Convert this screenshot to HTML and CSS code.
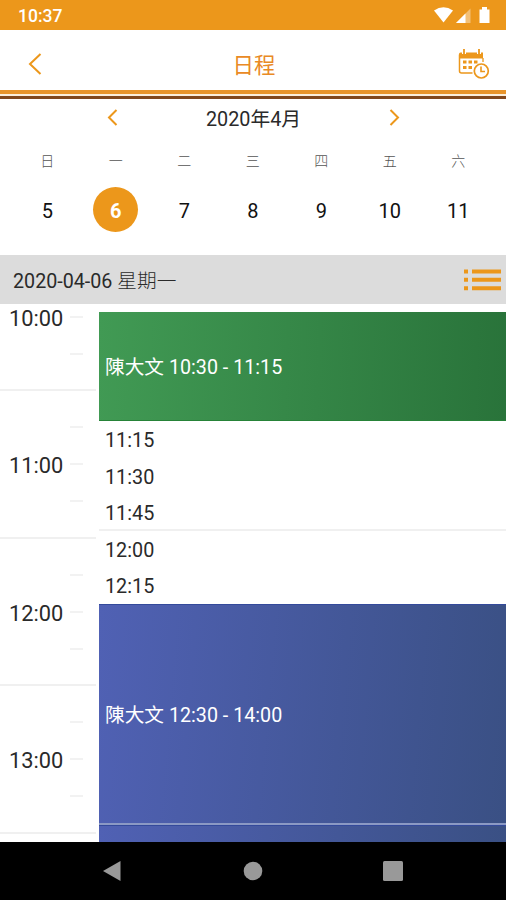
FILE: index.html
```html
<!DOCTYPE html>
<html lang="zh-Hant">
<head>
    <meta charset="UTF-8">
    <meta name="viewport" content="width=device-width, initial-scale=1.0">
    <title>日程</title>
    <link rel="stylesheet" href="styles.css">
</head>
<body>
    <div class="status">
        <span class="clock">10:37</span>
        <svg class="statusIcons" width="58" height="18" viewBox="0 0 58 18">
            <path d="M0 3.500Q9.500-3 19 3.500L9.500 15.500Z" fill="#fff"/>
            <path d="M22 16L36.500 1.500V16Z" fill="#fff" opacity=".4"/>
            <path d="M22 16L31.500 6.500V16Z" fill="#fff"/>
            <path d="M45.500 2.500h2.500V0h5v2.500h2.500V16h-10Z" fill="#fff"/>
        </svg>
    </div>
    <header class="header">
        <svg class="back" width="14" height="22" viewBox="0 0 14 22">
            <path d="M12.500 1L2 11L12.500 21"/>
        </svg>
        <h1>日程</h1>
        <svg class="calendar" width="32" height="31" viewBox="0 0 32 31">
            <path d="M1.500 5.500V22q0 2 2 2h11" fill="none" stroke="#ec971b" stroke-width="1.500"/>
            <path d="M1 9.500V5q0-1.500 1.500-1.500h22.500V9.500Z" fill="#ec971b"/>
            <path d="M25 9v4" stroke="#ec971b" stroke-width="1.300"/>
            <path d="M6 1v4M21 1v4" stroke="#fff" stroke-width="4"/>
            <path d="M6 0v5M21 0v5" stroke="#ec971b" stroke-width="1.800"/>
            <path d="M5 13h3.500M10.500 13h3.500M16 13h3.500M5 18.500h3.500M10.500 18.500h3.500" stroke="#ec971b" stroke-width="3.200"/>
            <circle cx="23.300" cy="22" r="7" fill="#fff" stroke="#ec971b" stroke-width="1.700"/>
            <path d="M23 17.500v5h4" fill="none" stroke="#ec971b" stroke-width="1.600"/>
        </svg>
    </header>
    <div class="stripes"></div>

    <div class="month">
        <svg width="11" height="17" viewBox="0 0 11 17"><path d="M9.500 1L2 8.500L9.500 16"/></svg>
        <span>2020年4月</span>
        <svg width="11" height="17" viewBox="0 0 11 17"><path d="M1.500 1L9 8.500L1.500 16"/></svg>
    </div>
    <div class="week names">
        <span>日</span>
        <span>一</span>
        <span>二</span>
        <span>三</span>
        <span>四</span>
        <span>五</span>
        <span>六</span>
    </div>
    <div class="week days">
        <span>5</span>
        <span class="active">6</span>
        <span>7</span>
        <span>8</span>
        <span>9</span>
        <span>10</span>
        <span>11</span>
    </div>

    <div class="dateBar">
        <span>2020-04-06 <b>星期一</b></span>
        <svg width="38" height="22" viewBox="0 0 38 22">
            <path d="M1 2.500h4M9 2.500H38M1 10.800h4M9 10.800H38M1 19.200h4M9 19.200H38"/>
        </svg>
    </div>

    <main class="schedule">
        <div class="hours">
            <div class="hour"><i></i><span>10:00</span><i></i><i></i></div>
            <div class="hour"><i></i><span>11:00</span><i></i><i></i></div>
            <div class="hour"><i></i><span>12:00</span><i></i><i></i></div>
            <div class="hour"><i></i><span>13:00</span><i></i><i></i></div>
        </div>
        <div class="slots">
            <div class="event green">陳大文 10:30 - 11:15</div>
            <div class="slot">11:15</div>
            <div class="slot">11:30</div>
            <div class="slot last">11:45</div>
            <div class="slot">12:00</div>
            <div class="slot">12:15</div>
            <div class="event blue">陳大文 12:30 - 14:00</div>
            <div class="event blue next"></div>
        </div>
    </main>

    <nav class="nav">
        <svg width="20" height="22" viewBox="0 0 20 22"><path d="M1 11L18.500 1V21Z"/></svg>
        <svg width="20" height="20" viewBox="0 0 20 20"><circle cx="10" cy="10" r="9.300"/></svg>
        <svg width="20" height="20" viewBox="0 0 20 20"><rect width="20" height="20" rx="1.500"/></svg>
    </nav>
</body>
</html>
```
FILE: styles.css
```css
*{
    box-sizing: border-box;
}
body{
    margin: 0;
    height: 900px;
    display: flex;
    flex-direction: column;
    overflow: hidden;
    background: white;
    color: #2a2a2a;
    font-family: Roboto, "Noto Sans CJK TC", sans-serif;
}
svg{
    display: block;
}
.status{
    height: 30px;
    flex: none;
    display: flex;
    align-items: center;
    justify-content: space-between;
    padding: 1px 14px 0 18px;
    background: #ec971b;
    color: white;
}
.clock{
    font-size: 17.5px;
    font-weight: 500;
}
.header{
    height: 60px;
    flex: none;
    display: flex;
    align-items: center;
    justify-content: space-between;
    padding: 8px 16px 0 28px;
}
.header h1{
    margin: 4px 0 0 8px;
    font-size: 21.5px;
    line-height: 30px;
    font-weight: 400;
    color: #e98a25;
}
.calendar{
    margin-top: 1px;
}
.back path, .month path{
    fill: none;
    stroke: #ec971b;
    stroke-width: 2;
}
.stripes{
    height: 9px;
    flex: none;
    border-top: 4px solid #e8942a;
    border-bottom: 3px solid #81471c;
    background: #fbeedb;
}
.month{
    height: 36px;
    flex: none;
    display: flex;
    align-items: center;
    justify-content: space-between;
    padding: 0 106px 0 107px;
    font-size: 19.8px;
}
.week{
    flex: none;
    display: grid;
    grid-template-columns: repeat(7, 68.5px);
    align-items: center;
    justify-items: center;
    padding-left: 13px;
}
.names{
    height: 50px;
    font-size: 14px;
    font-weight: 300;
    color: #555;
}
.days{
    height: 70px;
    padding-bottom: 22px;
    font-size: 20px;
    color: #111;
}
.days span{
    width: 45px;
    line-height: 48px;
    height: 45px;
    text-align: center;
}
.days .active{
    border-radius: 50%;
    background: #ec971b;
    color: white;
    font-weight: 700;
}
.dateBar{
    height: 49px;
    margin-top: .4px;
    flex: none;
    display: flex;
    align-items: center;
    justify-content: space-between;
    padding: 0 5px 0 13px;
    background: #dcdcdc;
    font-size: 19.7px;
}
.dateBar b{
    font-weight: 300;
}
.dateBar path{
    stroke: #ec971b;
    stroke-width: 4;
}
.schedule{
    height: 537.6px;
    flex: none;
    display: flex;
    overflow: hidden;
}
.hours{
    width: 99px;
    flex: none;
    margin-top: -60.8px;
}
.hour{
    width: 96px;
    height: 147.6px;
    display: grid;
    grid-template-columns: 70px 13px;
    grid-template-rows: 37px 37px 37px;
    align-content: start;
    border-bottom: 2px solid #f0f0f0;
    font-size: 21.8px;
}
.hour i{
    grid-column: 2;
    height: 2px;
    align-self: end;
    background: #f2f2f2;
}
.hour span{
    grid-column: 1;
    grid-row: 2;
    align-self: end;
    padding-left: 9px;
    line-height: 26px;
    margin-bottom: -14px;
}
.slots{
    flex: 1;
    padding-top: 7.6px;
}
.event{
    display: flex;
    align-items: center;
    padding-left: 6px;
    font-size: 19.7px;
    color: white;
}
.green{
    height: 109px;
    background: linear-gradient(92deg, #419a54, #29733a);
    border-bottom: 1px solid #268338;
}
.slot{
    height: 36.6px;
    padding-left: 6px;
    font-size: 19.8px;
    line-height: 40px;
}
.last{
    border-bottom: 2px solid #f0f0f0;
}
.blue{
    height: 219px;
    background: linear-gradient(95deg, #5061b4, #3a5084);
    border-top: 1px solid #344a9b;
}
.next{
    margin-top: 2px;
    height: 20px;
}
.blue:not(.next){
    box-shadow: 0 2px #8b99c4;
}
.nav{
    height: 58px;
    flex: none;
    display: flex;
    align-items: center;
    justify-content: space-between;
    padding: 0 103px 0 102px;
    background: black;
}
.nav svg{
    fill: #999;
}
```
